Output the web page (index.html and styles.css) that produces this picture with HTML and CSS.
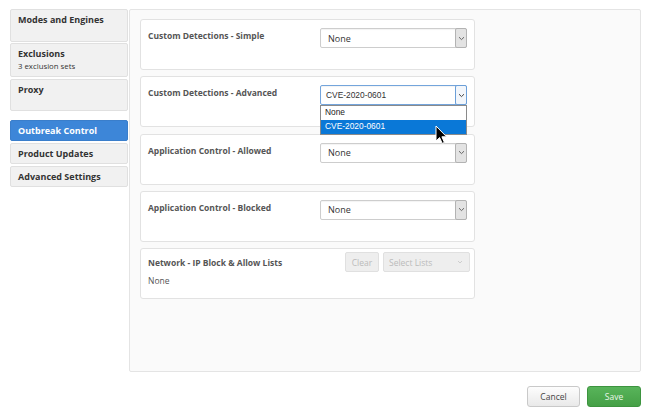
FILE: index.html
```html
<!DOCTYPE html>
<html>
<head>
<meta charset="utf-8">
<link rel="stylesheet" href="styles.css">
</head>
<body>
<div class="page">
  <div class="layout">
    <nav class="sidebar">
      <div class="nav-item h33 mb1">Modes and Engines</div>
      <div class="nav-item h34 mb2">Exclusions<div class="sub">3 exclusion sets</div></div>
      <div class="nav-item h32 mb9">Proxy</div>
      <div class="nav-item h21 mb2 active">Outbreak Control</div>
      <div class="nav-item h21 mb2">Product Updates</div>
      <div class="nav-item h21">Advanced Settings</div>
    </nav>
    <main class="panel">
      <div class="card">
        <div class="label">Custom Detections - Simple</div>
        <div class="select"><span class="value">None</span><span class="arrow"><svg width="7" height="5" viewBox="0 0 7 5"><path d="M1 1.2 L3.5 3.6 L6 1.2" fill="none" stroke="#666" stroke-width="1"/></svg></span></div>
      </div>
      <div class="card">
        <div class="label">Custom Detections - Advanced</div>
        <div class="select focus"><span class="value arial">CVE-2020-0601</span><span class="arrow"><svg width="7" height="5" viewBox="0 0 7 5"><path d="M1 1.2 L3.5 3.6 L6 1.2" fill="none" stroke="#444" stroke-width="1"/></svg></span>
          <div class="dropdown">
            <div class="opt">None</div>
            <div class="opt sel">CVE-2020-0601</div>
            <svg class="cursor" width="13" height="20" viewBox="0 0 13 20"><path d="M1 1 L1 16 L4.6 12.6 L7.2 18.4 L9.4 17.4 L6.9 11.8 L11.6 11.8 Z" fill="#000" stroke="#fff" stroke-width="1" stroke-linejoin="round"/></svg>
          </div>
        </div>
      </div>
      <div class="card">
        <div class="label">Application Control - Allowed</div>
        <div class="select"><span class="value">None</span><span class="arrow"><svg width="7" height="5" viewBox="0 0 7 5"><path d="M1 1.2 L3.5 3.6 L6 1.2" fill="none" stroke="#666" stroke-width="1"/></svg></span></div>
      </div>
      <div class="card">
        <div class="label">Application Control - Blocked</div>
        <div class="select"><span class="value">None</span><span class="arrow"><svg width="7" height="5" viewBox="0 0 7 5"><path d="M1 1.2 L3.5 3.6 L6 1.2" fill="none" stroke="#666" stroke-width="1"/></svg></span></div>
      </div>
      <div class="card net">
        <div class="net-head">
          <div class="label">Network - IP Block &amp; Allow Lists</div>
          <div class="net-actions">
            <span class="btn-disabled">Clear</span>
            <span class="select-disabled">Select Lists<svg width="6" height="4" viewBox="0 0 6 4"><path d="M1 1 L3 3 L5 1" fill="none" stroke="#c4c4c4" stroke-width="0.8"/></svg></span>
          </div>
        </div>
        <div class="net-value">None</div>
      </div>
    </main>
  </div>
  <div class="footer">
    <button class="btn cancel">Cancel</button>
    <button class="btn save">Save</button>
  </div>
</div>
</body>
</html>
```
FILE: styles.css
```css
* { box-sizing: border-box; }
html, body { margin: 0; padding: 0; background: #fff; }
body { font-family: "Open Sans", "Liberation Sans", sans-serif; font-size: 9px; color: #333; }
.page { padding: 9px 10px 0 10px; width: 651px; }
.layout { display: flex; align-items: flex-start; }
.sidebar { width: 118px; display: flex; flex-direction: column; }
.nav-item { background: #f1f1f1; border: 1px solid #e0e0e0; border-radius: 2px; padding: 3px 7px 2px 7px; font-weight: 700; font-size: 9px; line-height: 13px; color: #333; }
.nav-item .sub { font-weight: 400; font-size: 7.8px; line-height: 11px; color: #333; margin-top: 1px; }
.nav-item.active { background: #3d86d8; border-color: #3a7ecb; color: #fff; }
.h33 { height: 33px; } .h34 { height: 34px; } .h32 { height: 32px; } .h21 { height: 21px; padding-top: 3px; }
.mb1 { margin-bottom: 1px; } .mb2 { margin-bottom: 2px; } .mb9 { margin-bottom: 9px; }
.panel { margin-left: 1px; width: 512px; height: 363px; background: #fafafa; border: 1px solid #e4e4e4; border-radius: 2px; padding: 9px 10px; display: flex; flex-direction: column; gap: 6.25px; }
.card { width: 335px; height: 51px; flex: none; background: #fff; border: 1px solid #e2e2e2; border-radius: 3px; padding: 8px 7px 0 7px; display: flex; justify-content: space-between; align-items: flex-start; }
.label { font-weight: 700; font-size: 8.5px; line-height: 12px; color: #555; margin-top: 2px; }
.select { position: relative; width: 147px; height: 20px; border: 1px solid #cdcdcd; border-radius: 2px; background: #fff; display: flex; align-items: center; justify-content: space-between; box-shadow: inset 0 1px 1px rgba(0,0,0,0.05); }
.select .value { padding-left: 7px; font-size: 9px; color: #333; }
.select .value.arial { font-family: "Liberation Sans", Arial, sans-serif; font-size: 8.4px; padding-left: 5px; }
.select .arrow { width: 12px; height: 20px; margin: -1px -1px -1px 0; background: #e3e3e3; border: 1px solid #b3b3b3; border-radius: 2px; display: flex; align-items: center; justify-content: center; }
.select.focus { border-color: #74a5dc; }
.select.focus .arrow { background: #f2f6fb; border-color: #6b9fd8; }
.dropdown { position: absolute; top: 19px; left: -1px; width: 147px; background: #fff; border: 1px solid #8a8a8a; font-family: "Liberation Sans", Arial, sans-serif; font-size: 8.4px; color: #222; z-index: 5; }
.opt { height: 14px; line-height: 13px; padding-left: 4px; }
.opt.sel { background: #0a78d7; color: #fff; }
.cursor { position: absolute; left: 114px; top: 19px; }
.card.net { flex-direction: column; justify-content: flex-start; align-items: stretch; padding: 3px 4px 0 7px; }
.net-head { display: flex; justify-content: space-between; align-items: center; height: 20px; }
.net-head .label { margin-top: 2px; }
.net-actions { display: flex; gap: 4px; }
.btn-disabled { width: 34px; height: 20px; background: #eeeeee; border: 1px solid #e0e0e0; border-radius: 2px; color: #bbb; font-size: 8.5px; display: flex; align-items: center; justify-content: center; }
.select-disabled { width: 87px; height: 20px; background: #eeeeee; border: 1px solid #e0e0e0; border-radius: 2px; color: #bbb; font-size: 8.5px; display: flex; align-items: center; justify-content: space-between; padding: 0 6px 0 5px; }
.net-value { font-size: 8.5px; color: #555; line-height: 12px; margin-top: 3px; }
.footer { display: flex; justify-content: flex-end; gap: 7px; margin-top: 14px; padding-right: 0; width: 631px; }
.btn { height: 21px; border-radius: 3px; font-family: "Open Sans", sans-serif; font-size: 8.5px; padding: 0; }
.cancel { width: 53px; background: linear-gradient(#fdfdfd, #e9e9e9); border: 1px solid #c9c9c9; color: #444; }
.save { width: 54px; background: linear-gradient(#58b45a, #45a046); border: 1px solid #3d943f; color: #e9f6e9; }
```
